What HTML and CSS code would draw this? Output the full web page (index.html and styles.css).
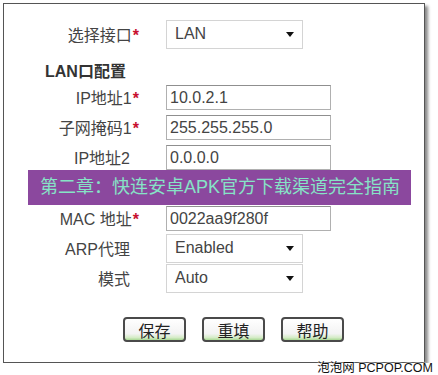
FILE: index.html
```html
<!DOCTYPE html>
<html lang="zh-cn">
<head>
    <meta charset="UTF-8">
    <meta name="viewport" content="width=device-width, initial-scale=1.0">
    <title>LAN口配置</title>
    <link rel="stylesheet" href="styles.css">
</head>
<body>
    <div class="frame">
        <div class="row">
            <div class="label">选择接口<span class="req">*</span></div>
            <div class="select"><span>LAN</span><i class="arrow"></i></div>
        </div>

        <div class="heading">LAN口配置</div>

        <div class="row">
            <div class="label">IP地址1<span class="req">*</span></div>
            <div class="input">10.0.2.1</div>
        </div>
        <div class="row">
            <div class="label">子网掩码1<span class="req">*</span></div>
            <div class="input">255.255.255.0</div>
        </div>
        <div class="row">
            <div class="label">IP地址2</div>
            <div class="input">0.0.0.0</div>
        </div>
        <!-- row hidden under the banner -->
        <div class="row row-tall"></div>
        <div class="row">
            <div class="label">MAC 地址<span class="req">*</span></div>
            <div class="input">0022aa9f280f</div>
        </div>
        <div class="row">
            <div class="label">ARP代理</div>
            <div class="select"><span>Enabled</span><i class="arrow"></i></div>
        </div>
        <div class="row">
            <div class="label">模式</div>
            <div class="select"><span>Auto</span><i class="arrow"></i></div>
        </div>

        <div class="actions">
            <button>保存</button>
            <button>重填</button>
            <button>帮助</button>
        </div>

        <div class="banner">第二章：快连安卓APK官方下载渠道完全指南</div>
    </div>

    <div class="mark">泡泡网 PCPOP.COM</div>
</body>
</html>
```

FILE: styles.css
```css
*, *::before, *::after {
    box-sizing: border-box;
}

body {
    margin: 0;
    background-color: #fff;
    font: 16px "Liberation Sans", "Noto Sans CJK SC", sans-serif;
    color: #333;
}

div.frame {
    position: relative;
    width: 422px;
    margin: 3px 0 0 3px;
    padding-top: 15px;
    padding-bottom: 20px;
    border: 1px solid #555;
    box-shadow: 3px 3px 3px #8a8a8a;
    background-color: #fff;
}

div.row {
    display: grid;
    grid-template-columns: 126px 1fr;
    column-gap: 36px;
    align-items: center;
    height: 30px;
}

div.row-tall {
    height: 31px;
}

div.label {
    text-align: right;
    white-space: nowrap;
    color: #444;
}

span.req {
    margin-right: -9px;
    margin-left: 1px;
    color: #c8102e;
    font-weight: bold;
}

div.heading {
    margin-top: 13px;
    height: 20px;
    line-height: 20px;
    padding-left: 41px;
    font-weight: bold;
    color: #333;
}

div.input {
    width: 165px;
    height: 25px;
    padding-left: 3px;
    line-height: 23px;
    border: 1px solid #b0b0b0;
    border-top-color: #8f8f8f;
    color: #444;
}

div.select {
    display: flex;
    align-items: center;
    justify-content: space-between;
    width: 137px;
    height: 29px;
    padding: 0 8px 0 8px;
    border: 1px solid #d4d4d4;
    color: #444;
}

i.arrow {
    width: 0;
    height: 0;
    border-left: 4px solid transparent;
    border-right: 4px solid transparent;
    border-top: 5px solid #111;
}

div.actions {
    display: flex;
    gap: 16px;
    margin-top: 24px;
    padding-left: 119px;
}

button {
    width: 63px;
    height: 25px;
    padding: 0;
    border: 2px solid #4a4a4a;
    border-radius: 4px;
    font: 16px "Noto Sans CJK SC", sans-serif;
    line-height: 20px;
    color: #222;
    background: linear-gradient(#fff 0%, #f3f3f3 70%, #d6ecc8 88%, #a9d894 100%);
    cursor: pointer;
}

div.banner {
    position: absolute;
    top: 166px;
    left: 24px;
    width: 383px;
    height: 35px;
    padding-left: 12px;
    font: 18px "Liberation Sans", "Noto Sans CJK SC", sans-serif;
    line-height: 35px;
    white-space: nowrap;
    color: #86e3c6;
    background-color: #8b489e;
}

div.mark {
    position: absolute;
    top: 357px;
    right: 5px;
    font: 12.5px "Liberation Sans", "Noto Sans CJK SC", sans-serif;
    color: #111;
    text-shadow: 0 0 2px #fff, 0 0 2px #fff;
}
```
